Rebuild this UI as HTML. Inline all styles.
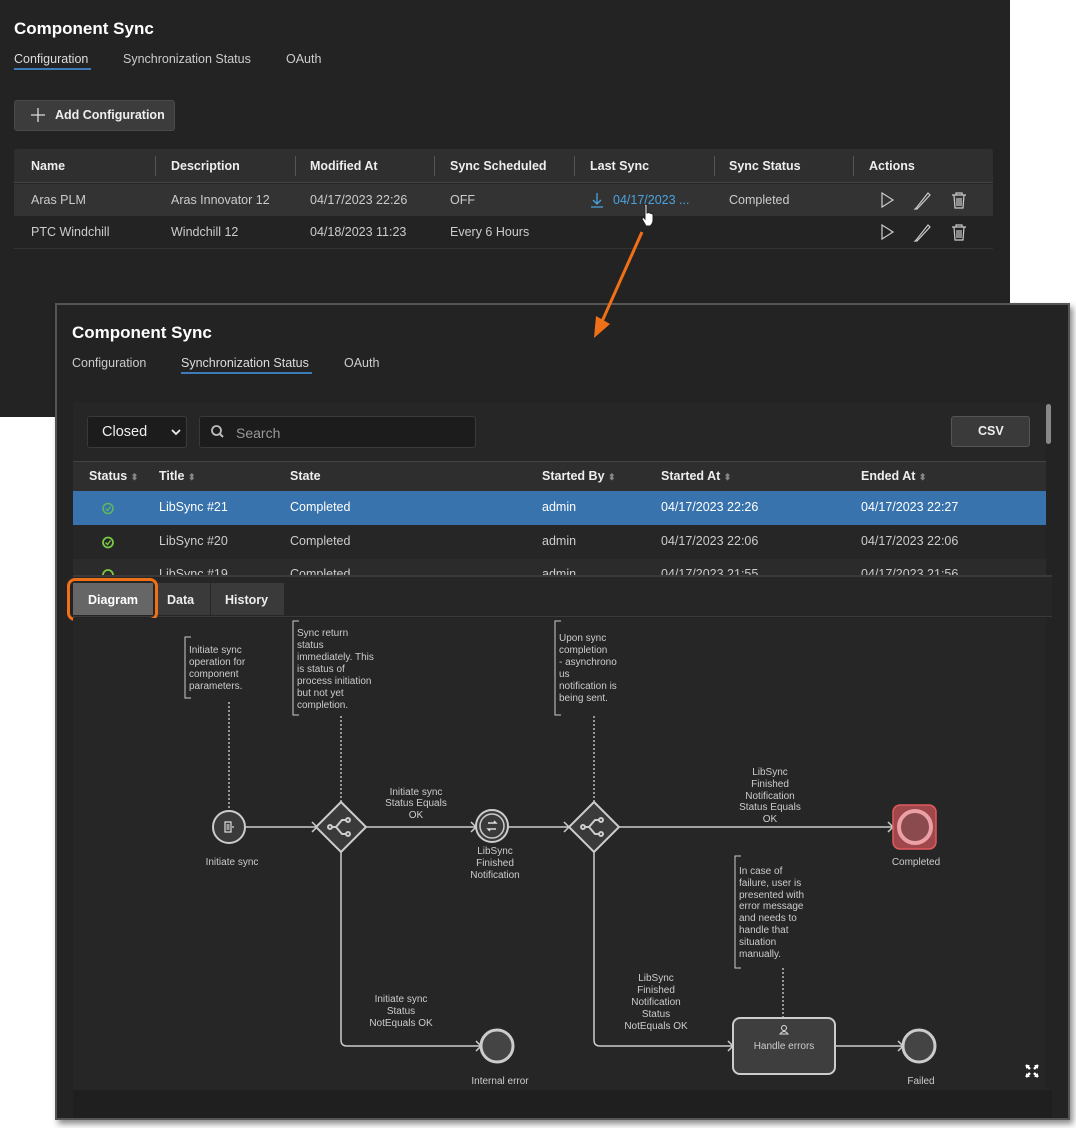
<!DOCTYPE html>
<html><head><meta charset="utf-8"><style>
*{margin:0;padding:0;box-sizing:border-box}
body{width:1076px;height:1128px;background:#fff;position:relative;overflow:hidden;font-family:"Liberation Sans",sans-serif;color:#ddd}
.a{position:absolute;white-space:nowrap}
.b{font-weight:bold;color:#eee}
</style></head><body>
<!-- back panel -->
<div class="a" style="left:0;top:0;width:1010px;height:417px;background:#232323"></div>
<div class="a b" style="left:14px;top:19px;font-size:17px;color:#fff">Component Sync</div>
<div class="a" style="left:14px;top:52px;font-size:12.5px;color:#ddd">Configuration</div>
<div class="a" style="left:14px;top:68px;width:77px;height:2px;background:#3d7ab8"></div>
<div class="a" style="left:123px;top:52px;font-size:12.5px;color:#ccc">Synchronization Status</div>
<div class="a" style="left:286px;top:52px;font-size:12.5px;color:#ccc">OAuth</div>
<div class="a" style="left:14px;top:100px;width:161px;height:31px;background:#3c3c3c;border:1px solid #4a4a4a;border-radius:3px"></div>
<svg class="a" style="left:30px;top:107px" width="16" height="16"><path d="M8 1V15M1 8H15" stroke="#ddd" stroke-width="1.3"/></svg>
<div class="a b" style="left:55px;top:108px;font-size:12.5px">Add Configuration</div>
<div class="a" style="left:14px;top:149px;width:979px;height:100px;background:#262626;border-radius:3px"></div>
<div class="a" style="left:14px;top:149px;width:979px;height:34px;background:#2f2f2f;border-bottom:1px solid #444;border-radius:3px 3px 0 0"></div>
<div class="a" style="left:14px;top:184px;width:979px;height:32px;background:#333"></div>
<div class="a" style="left:14px;top:216px;width:979px;height:33px;background:#232323;border-bottom:1px solid #333"></div>
<div class="a b" style="left:31px;top:159px;font-size:12.5px">Name</div>
<div class="a b" style="left:171px;top:159px;font-size:12.5px">Description</div>
<div class="a b" style="left:310px;top:159px;font-size:12.5px">Modified At</div>
<div class="a b" style="left:450px;top:159px;font-size:12.5px">Sync Scheduled</div>
<div class="a b" style="left:590px;top:159px;font-size:12.5px">Last Sync</div>
<div class="a b" style="left:729px;top:159px;font-size:12.5px">Sync Status</div>
<div class="a b" style="left:869px;top:159px;font-size:12.5px">Actions</div>
<div class="a" style="left:155px;top:156px;width:1px;height:20px;background:#555"></div>
<div class="a" style="left:295px;top:156px;width:1px;height:20px;background:#555"></div>
<div class="a" style="left:434px;top:156px;width:1px;height:20px;background:#555"></div>
<div class="a" style="left:574px;top:156px;width:1px;height:20px;background:#555"></div>
<div class="a" style="left:714px;top:156px;width:1px;height:20px;background:#555"></div>
<div class="a" style="left:853px;top:156px;width:1px;height:20px;background:#555"></div>
<div class="a" style="left:31px;top:193px;font-size:12.5px;color:#ccc">Aras PLM</div>
<div class="a" style="left:171px;top:193px;font-size:12.5px;color:#ccc">Aras Innovator 12</div>
<div class="a" style="left:310px;top:193px;font-size:12.5px;color:#ccc">04/17/2023 22:26</div>
<div class="a" style="left:450px;top:193px;font-size:12.5px;color:#ccc">OFF</div>
<div class="a" style="left:613px;top:193px;font-size:12.5px;color:#4aa3df">04/17/2023 ...</div>
<svg class="a" style="left:589px;top:191px" width="16" height="18"><path d="M8 2V13M4 9L8 13L12 9M2 16H14" stroke="#4aa3df" stroke-width="1.3" fill="none"/></svg>
<div class="a" style="left:729px;top:193px;font-size:12.5px;color:#ccc">Completed</div>
<div class="a" style="left:31px;top:225px;font-size:12.5px;color:#ccc">PTC Windchill</div>
<div class="a" style="left:171px;top:225px;font-size:12.5px;color:#ccc">Windchill 12</div>
<div class="a" style="left:310px;top:225px;font-size:12.5px;color:#ccc">04/18/2023 11:23</div>
<div class="a" style="left:450px;top:225px;font-size:12.5px;color:#ccc">Every 6 Hours</div>
<svg class="a" style="left:876px;top:190px" width="96" height="56">
<g stroke="#ccc" stroke-width="1.2" fill="none">
<path d="M6 3L17 10L6 17Z"/><path d="M6 35L17 42L6 49Z"/>
<path d="M41 17L39 19L41 19L54 5L52 3Z"/><path d="M41 49L39 51L41 51L54 37L52 35Z"/>
<path d="M76 5H90M80 5V3H86V5M78 5L79 18H87L88 5M81 8V16M83 8V16M85 8V16"/>
<path d="M76 37H90M80 37V35H86V37M78 37L79 50H87L88 37M81 40V48M83 40V48M85 40V48"/>
</g></svg>
<!-- cursor -->
<svg class="a" style="left:640px;top:203px" width="16" height="26"><path d="M4 2Q5.5 0.5 7 2V10L9 9.5L11 10.5L13 11V18Q12 22 10 23H6L2 16L3 14L5 16V3Z" fill="#fff" stroke="#222" stroke-width="1"/></svg>
<!-- front panel -->
<div class="a" style="left:55px;top:303px;width:1015px;height:817px;background:#232323;border:2px solid #555;box-shadow:3px 4px 6px rgba(0,0,0,.45)"></div>
<!-- arrow -->
<svg class="a" style="left:590px;top:228px" width="60" height="115"><path d="M52 4L10 98" stroke="#f07018" stroke-width="3"/><path d="M4 110L6 88L20 96Z" fill="#f07018"/></svg>
<div class="a b" style="left:72px;top:323px;font-size:17px;color:#fff">Component Sync</div>
<div class="a" style="left:72px;top:356px;font-size:12.5px;color:#ccc">Configuration</div>
<div class="a" style="left:181px;top:356px;font-size:12.5px;color:#ddd">Synchronization Status</div>
<div class="a" style="left:181px;top:372px;width:131px;height:2px;background:#3d7ab8"></div>
<div class="a" style="left:344px;top:356px;font-size:12.5px;color:#ccc">OAuth</div>
<div class="a" style="left:73px;top:403px;width:973px;height:173px;background:#262626"></div>
<div class="a" style="left:1046px;top:404px;width:5px;height:40px;background:#888;border-radius:3px"></div>
<div class="a" style="left:87px;top:416px;width:100px;height:32px;background:#1c1c1c;border:1px solid #3a3a3a;border-radius:3px"></div>
<div class="a" style="left:102px;top:424px;font-size:14.5px;color:#eee">Closed</div>
<svg class="a" style="left:170px;top:427px" width="12" height="10"><path d="M2 3L6 7L10 3" stroke="#eee" stroke-width="1.8" fill="none"/></svg>
<div class="a" style="left:199px;top:416px;width:277px;height:32px;background:#1c1c1c;border:1px solid #3a3a3a;border-radius:3px"></div>
<svg class="a" style="left:210px;top:424px" width="16" height="16"><circle cx="6.5" cy="6.5" r="4.5" stroke="#bbb" stroke-width="1.8" fill="none"/><path d="M10 10L13 13" stroke="#bbb" stroke-width="2"/></svg>
<div class="a" style="left:236px;top:425px;font-size:14px;color:#999">Search</div>
<div class="a" style="left:951px;top:416px;width:79px;height:31px;background:#3a3a3a;border:1px solid #555;border-radius:3px"></div>
<div class="a b" style="left:978px;top:424px;font-size:12.5px">CSV</div>
<div class="a" style="left:73px;top:461px;width:973px;height:30px;background:#2e2e2e;border-top:1px solid #444"></div>
<div class="a b" style="left:89px;top:469px;font-size:12.5px">Status <span style="color:#888;font-size:9px">⬍</span></div>
<div class="a b" style="left:159px;top:469px;font-size:12.5px">Title <span style="color:#888;font-size:9px">⬍</span></div>
<div class="a b" style="left:290px;top:469px;font-size:12.5px">State</div>
<div class="a b" style="left:542px;top:469px;font-size:12.5px">Started By <span style="color:#888;font-size:9px">⬍</span></div>
<div class="a b" style="left:661px;top:469px;font-size:12.5px">Started At <span style="color:#888;font-size:9px">⬍</span></div>
<div class="a b" style="left:861px;top:469px;font-size:12.5px">Ended At <span style="color:#888;font-size:9px">⬍</span></div>
<div class="a" style="left:73px;top:491px;width:973px;height:34px;background:#3873ad"></div>
<div class="a" style="left:73px;top:525px;width:973px;height:34px;background:#262626"></div>
<div class="a" style="left:73px;top:559px;width:973px;height:17px;background:#2b2b2b;overflow:hidden"></div>
<svg class="a" style="left:101px;top:501px" width="14" height="50"><circle cx="7" cy="7.5" r="5" stroke="#5cb85c" stroke-width="1.5" fill="none"/><path d="M4.5 7.5L6.5 9.5L9.5 5.5" stroke="#5cb85c" stroke-width="1.2" fill="none"/><circle cx="7" cy="41.5" r="5" stroke="#7ac943" stroke-width="1.8" fill="none"/><path d="M4.5 41.5L6.5 43.5L9.5 39.5" stroke="#7ac943" stroke-width="1.4" fill="none"/></svg>
<div class="a" style="left:159px;top:500px;font-size:12.5px;color:#fff">LibSync #21</div>
<div class="a" style="left:290px;top:500px;font-size:12.5px;color:#fff">Completed</div>
<div class="a" style="left:542px;top:500px;font-size:12.5px;color:#fff">admin</div>
<div class="a" style="left:661px;top:500px;font-size:12.5px;color:#fff">04/17/2023 22:26</div>
<div class="a" style="left:861px;top:500px;font-size:12.5px;color:#fff">04/17/2023 22:27</div>
<div class="a" style="left:159px;top:534px;font-size:12.5px;color:#ccc">LibSync #20</div>
<div class="a" style="left:290px;top:534px;font-size:12.5px;color:#ccc">Completed</div>
<div class="a" style="left:542px;top:534px;font-size:12.5px;color:#ccc">admin</div>
<div class="a" style="left:661px;top:534px;font-size:12.5px;color:#ccc">04/17/2023 22:06</div>
<div class="a" style="left:861px;top:534px;font-size:12.5px;color:#ccc">04/17/2023 22:06</div>
<div class="a" style="left:73px;top:559px;width:973px;height:16px;overflow:hidden;font-size:12.5px;color:#ccc">
<span class="a" style="left:86px;top:8px">LibSync #19</span><span class="a" style="left:217px;top:8px">Completed</span><span class="a" style="left:469px;top:8px">admin</span><span class="a" style="left:588px;top:8px">04/17/2023 21:55</span><span class="a" style="left:788px;top:8px">04/17/2023 21:56</span>
<svg class="a" style="left:28px;top:9px" width="14" height="10"><circle cx="7" cy="7" r="5" stroke="#7ac943" stroke-width="1.8" fill="none"/></svg></div>
<div class="a" style="left:73px;top:575px;width:979px;height:2px;background:#3a3a3a"></div>
<div class="a" style="left:73px;top:577px;width:979px;height:40px;background:#262626;border-bottom:1px solid #3a3a3a"></div>
<div class="a" style="left:73px;top:583px;width:80px;height:32px;background:#666"></div>
<div class="a" style="left:155px;top:583px;width:55px;height:32px;background:#3a3a3a"></div>
<div class="a" style="left:211px;top:583px;width:73px;height:32px;background:#3a3a3a"></div>
<div class="a" style="left:67px;top:578px;width:91px;height:43px;border:3px solid #f07018;border-radius:8px"></div>
<div class="a b" style="left:88px;top:593px;font-size:12.5px;color:#fff">Diagram</div>
<div class="a b" style="left:167px;top:593px;font-size:12.5px">Data</div>
<div class="a b" style="left:225px;top:593px;font-size:12.5px">History</div>
<div class="a" style="left:73px;top:618px;width:973px;height:472px;background:#262626"></div>
<div class="a" style="left:73px;top:1090px;width:979px;height:28px;background:#1f1f1f"></div>
<!-- diagram -->
<svg class="a" style="left:0;top:0" width="1076" height="1128">
<g fill="none" stroke="#ccc" stroke-width="1">
<path d="M191 637H185V698H191"/><path d="M299 621H293V715H299"/><path d="M561 621H555V715H561"/><path d="M741 856H735V968H741"/>
</g>
<g stroke="#bbb" stroke-width="1.5" stroke-dasharray="2 2"><path d="M229 702V810"/><path d="M341 716V802"/><path d="M594 716V802"/><path d="M783 968V1018"/></g>
<g fill="none" stroke="#ccc" stroke-width="1.5">
<path d="M245 827H316M366 827H476M508 827H569M619 827H893"/>
<path d="M341 852V1040Q341 1046 347 1046H481"/>
<path d="M594 852V1040Q594 1046 600 1046H733"/>
<path d="M835 1046H903"/>
<path d="M312 822L317 827L312 832M471 822L476 827L471 832M564 822L569 827L564 832M888 822L893 827L888 832M476 1041L481 1046L476 1051M728 1041L733 1046L728 1051M898 1041L903 1046L898 1051"/>
</g>
<circle cx="229" cy="827" r="16" fill="#3a3a3a" stroke="#ccc" stroke-width="2"/>
<path d="M225 822H231V832H225ZM226.5 825H229.5M226.5 827H229.5M226.5 829H229.5M232 827H234" stroke="#ddd" stroke-width="1.2" fill="none"/>
<g fill="#3a3a3a" stroke="#ccc" stroke-width="2"><path d="M341 802L366 827L341 852L316 827Z"/><path d="M594 802L619 827L594 852L569 827Z"/></g>
<g fill="none" stroke="#ccc" stroke-width="2"><path d="M331 827H336L342 820H346M336 827L342 834H346"/><circle cx="330" cy="827" r="2"/><circle cx="348" cy="820" r="2"/><circle cx="348" cy="834" r="2"/>
<path d="M584 827H589L595 820H599M589 827L595 834H599"/><circle cx="583" cy="827" r="2"/><circle cx="601" cy="820" r="2"/><circle cx="601" cy="834" r="2"/></g>
<circle cx="492" cy="826" r="16" fill="#3a3a3a" stroke="#ccc" stroke-width="2"/><circle cx="492" cy="826" r="12" fill="none" stroke="#ccc" stroke-width="1.5"/>
<path d="M488 823H496L494 821M496 829H488L490 831" stroke="#ddd" stroke-width="1.4" fill="none"/>
<rect x="893" y="805" width="43" height="44" rx="7" fill="#a0474c" stroke="#e05a5e" stroke-width="1.5"/>
<circle cx="915" cy="827" r="16" fill="#8a4a4e" stroke="#eaa0a4" stroke-width="4"/>
<circle cx="497" cy="1046" r="16" fill="#444" stroke="#ccc" stroke-width="3"/>
<circle cx="919" cy="1046" r="16" fill="#444" stroke="#ccc" stroke-width="3"/>
<rect x="733" y="1018" width="102" height="56" rx="7" fill="#3e3e3e" stroke="#ccc" stroke-width="2"/>
<circle cx="784" cy="1028" r="2.5" fill="none" stroke="#ddd" stroke-width="1"/><path d="M780 1034Q784 1029 788 1034Z" fill="none" stroke="#ddd" stroke-width="1"/>
<path d="M1026 1065l4 4M1038 1065l-4 4M1026 1077l4-4M1038 1077l-4-4" stroke="#fff" stroke-width="2.5"/>
<path d="M1026 1065h4l-4 4zM1038 1065h-4l4 4zM1026 1077h4l-4-4zM1038 1077h-4l4-4z" fill="#fff"/>
<g font-family="Liberation Sans,sans-serif" font-size="10" fill="#ccc">
<text x="189" y="653">Initiate sync</text><text x="189" y="665">operation for</text><text x="189" y="677">component</text><text x="189" y="689">parameters.</text>
<text x="297" y="636">Sync return</text><text x="297" y="648">status</text><text x="297" y="660">immediately. This</text><text x="297" y="672">is status of</text><text x="297" y="684">process initiation</text><text x="297" y="696">but not yet</text><text x="297" y="708">completion.</text>
<text x="559" y="641">Upon sync</text><text x="559" y="653">completion</text><text x="559" y="665">- asynchrono</text><text x="559" y="677">us</text><text x="559" y="689">notification is</text><text x="559" y="701">being sent.</text>
<text x="739" y="874">In case of</text><text x="739" y="886">failure, user is</text><text x="739" y="898">presented with</text><text x="739" y="909">error message</text><text x="739" y="921">and needs to</text><text x="739" y="933">handle that</text><text x="739" y="945">situation</text><text x="739" y="957">manually.</text>
<g text-anchor="middle">
<text x="232" y="865">Initiate sync</text>
<text x="416" y="795">Initiate sync</text><text x="416" y="806">Status Equals</text><text x="416" y="818">OK</text>
<text x="495" y="854">LibSync</text><text x="495" y="866">Finished</text><text x="495" y="878">Notification</text>
<text x="770" y="775">LibSync</text><text x="770" y="787">Finished</text><text x="770" y="799">Notification</text><text x="770" y="810">Status Equals</text><text x="770" y="822">OK</text>
<text x="916" y="865">Completed</text>
<text x="401" y="1002">Initiate sync</text><text x="401" y="1014">Status</text><text x="401" y="1026">NotEquals OK</text>
<text x="500" y="1084">Internal error</text>
<text x="656" y="981">LibSync</text><text x="656" y="993">Finished</text><text x="656" y="1005">Notification</text><text x="656" y="1017">Status</text><text x="656" y="1029">NotEquals OK</text>
<text x="784" y="1049">Handle errors</text>
<text x="921" y="1084">Failed</text>
</g></g>
</svg>
</body></html>
